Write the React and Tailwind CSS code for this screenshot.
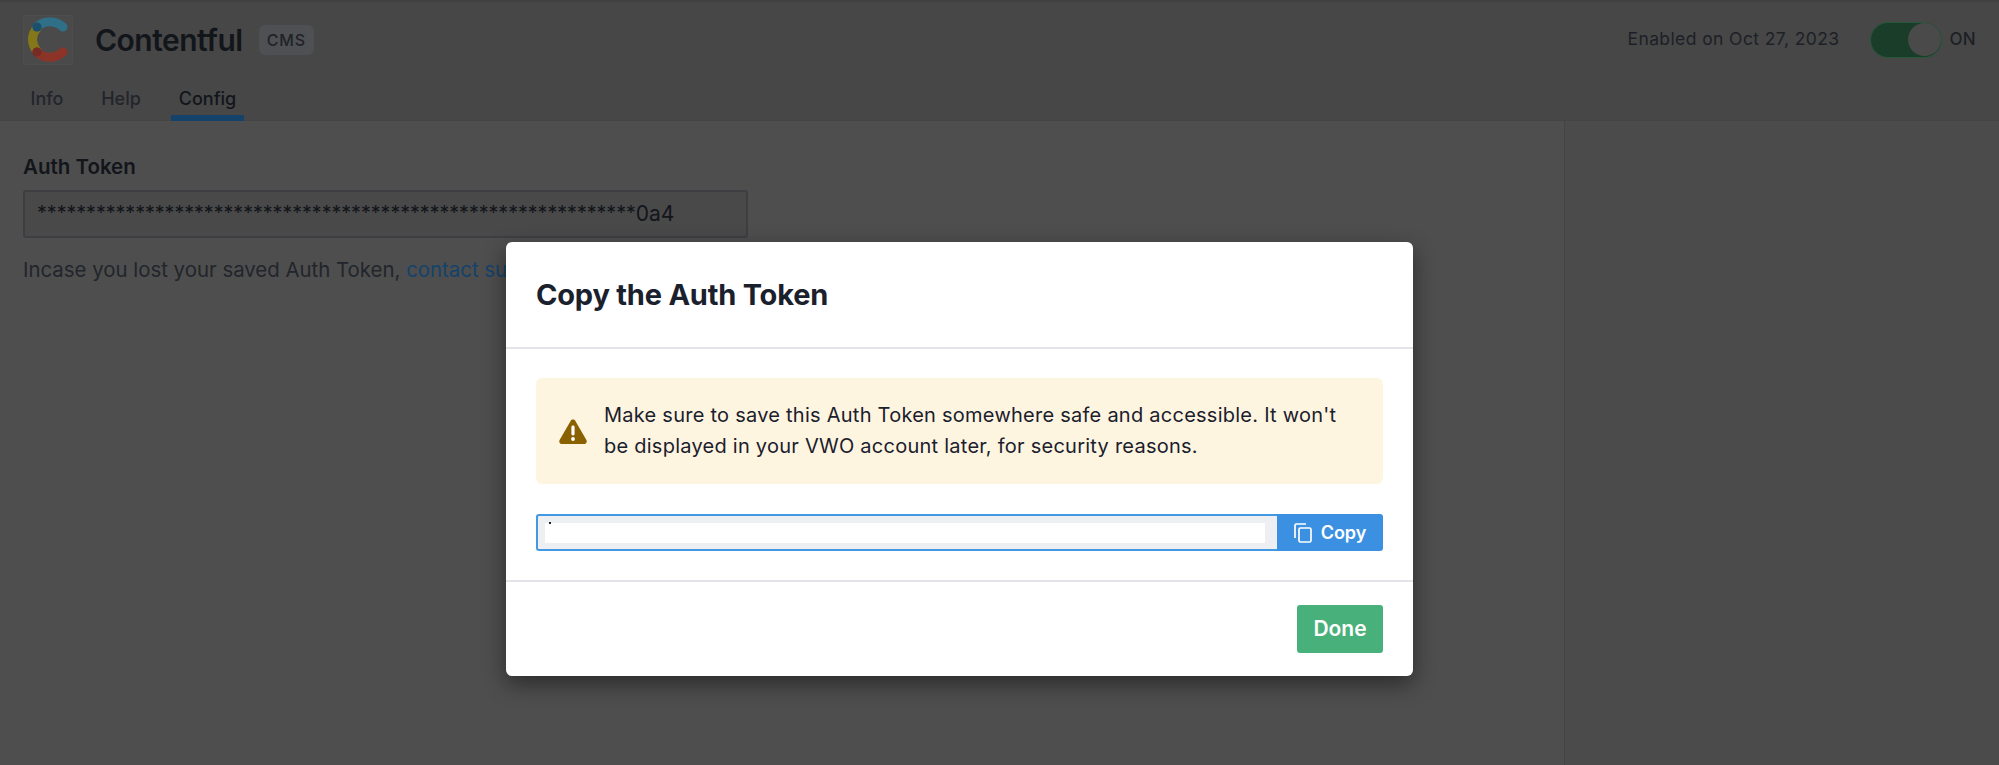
import React from "react";

const FONT = { fontFamily: "Inter, sans-serif" };

const ContentfulLogo = () => (
  <svg width="42" height="48" viewBox="0 0 42 48" fill="none" strokeLinecap="round" strokeWidth="9">
    <path d="M10 35 C4 28 4 19 10 12" stroke="#84771a" />
    <path d="M10 36 C17 43 28 43 36 36" stroke="#8c3428" />
    <path d="M10 11 C17 4 28 4 36 11" stroke="#2f6f88" />
    <circle cx="10" cy="11" r="4.600" fill="#1c4f6c" />
    <circle cx="10" cy="36" r="4.600" fill="#762b24" />
  </svg>
);

const WarningIcon = () => (
  <svg width="28" height="25" viewBox="0 0 28 25" className="shrink-0">
    <path d="M14 0.5c1 0 1.9.5 2.4 1.4l11 19.2c1 1.8-.3 3.9-2.4 3.9H3c-2.1 0-3.4-2.1-2.4-3.9l11-19.2C12.100 1 13 .5 14 .5z" fill="#8a6100" />
    <rect x="12.400" y="6.500" width="3.200" height="10" rx="1.400" fill="#fff" />
    <circle cx="14" cy="20" r="1.900" fill="#fff" />
  </svg>
);

const CopyIcon = () => (
  <svg width="18" height="20" viewBox="0 0 18 20" fill="none" stroke="#fff" strokeWidth="1.700">
    <path d="M12 1H2.500A1.500 1.500 0 0 0 1 2.500V15" />
    <rect x="5" y="5" width="12" height="14" rx="1.500" />
  </svg>
);

const tabs = [
  { name: "Info", width: "w-[48px]" },
  { name: "Help", width: "w-[56px]" },
  { name: "Config", width: "w-[73px]" },
];

const App = () => {
  return (
    <div className="relative h-[765px] w-full overflow-hidden bg-[#4e4e4e]" style={FONT}>
      {/* Header */}
      <div className="h-[121px] border-b border-[#444444] bg-[#474747] border-t-2 border-t-[#414141]">
        <div className="flex h-[75px] items-center justify-between pl-[23px] pr-[23px]">
          <div className="flex items-center">
            <div className="flex h-[50px] w-[50px] items-center justify-center rounded-[3px] border border-[#4e4e4e] bg-[#4a4a4a]">
              <ContentfulLogo />
            </div>
            <span className="ml-[22px] text-[30px] font-semibold leading-none tracking-[-0.5px] text-[#12151a]">Contentful</span>
            <span className="ml-[16px] rounded-md bg-[#4e5054] px-2 py-[5px] text-[16px] font-medium leading-[20px] tracking-[0.8px] text-[#1f2228]">CMS</span>
          </div>
          <div className="flex items-center">
            <span className="text-[17.500px] tracking-[0.4px] text-[#1d2026]">Enabled on Oct 27, 2023</span>
            <div className="ml-[30px] flex h-[36px] w-[72px] items-center justify-end rounded-full border border-[#28563c] bg-[#1a3d2a]">
              <div className="h-[33px] w-[33px] rounded-full bg-[#4a4a4a]" />
            </div>
            <span className="ml-2 text-[17px] font-medium tracking-[0.3px] text-[#1d2026]">ON</span>
          </div>
        </div>
        <div className="flex h-[44px] items-end gap-[22px] pl-[23px]">
          {tabs.map((tab) => (
            <div
              key={tab.name}
              className={`flex h-[44px] ${tab.width} items-start justify-center border-b-[6px] pt-[8px] text-[18px] font-medium leading-[28px] ${
                tab.name === "Config" ? "border-[#14426b] text-[#12151a]" : "border-transparent text-[#22252b]"
              }`}
            >
              {tab.name}
            </div>
          ))}
        </div>
      </div>

      {/* Body */}
      <div className="flex h-[644px]">
        <div className="w-[1565px] border-r border-[#444444] pl-[23px] pt-[33px]">
          <div className="text-[20.500px] font-semibold leading-[26px] text-[#12151a]">Auth Token</div>
          <div className="mt-[10px] flex h-[48px] w-[725px] items-center rounded-[3px] border-2 border-[#3c3e42] bg-[#494949] pl-[12px] text-[19.600px] text-[#12151a]">
            *************************************************************<span className="text-[21px]">0a4</span>
          </div>
          <p className="mt-[18px] text-[20.400px] leading-[28px] text-[#22252b]">
            Incase you lost your saved Auth Token, <span className="text-[#14426b]">contact support</span>
          </p>
        </div>
        <div className="flex-1 bg-[#4b4b4b]" />
      </div>

      {/* Modal */}
      <div className="absolute left-[506px] top-[242px] h-[434px] w-[907px] rounded-md bg-white text-[#1a202c] shadow-[0_8px_22px_rgba(0,0,0,0.45)]">
        <div className="flex h-[107px] items-center border-b-2 border-[#e2e4ea] px-[30px]">
          <h2 className="text-[29px] font-bold tracking-[-0.2px]">Copy the Auth Token</h2>
        </div>
        <div className="h-[233px] border-b-2 border-[#e2e4ea] px-[30px] pt-[29px]">
          <div className="flex h-[106px] items-center rounded-md bg-[#fef5e0] pl-[23px] pr-[40px]">
            <WarningIcon />
            <p className="ml-[17px] text-[20px] leading-[31px] tracking-[0.25px]">
              Make sure to save this Auth Token somewhere safe and accessible. It won't be displayed in your VWO account later, for security reasons.
            </p>
          </div>
          <div className="mt-[30px] flex h-[37px]">
            <div className="relative flex flex-1 items-center rounded-l-[3px] border-2 border-r-0 border-[#4299e1] bg-[#edeff2] pl-[7px] pr-[12px]">
              <div className="h-[20px] w-full bg-white" />
              <span className="absolute left-[11px] top-[6px] h-[2px] w-[2px] bg-[#1a202c]" />
            </div>
            <button className="flex w-[106px] items-center justify-center gap-[9px] rounded-r-[3px] bg-[#3b90e2] text-[18px] font-semibold text-white">
              <CopyIcon />
              Copy
            </button>
          </div>
        </div>
        <div className="flex justify-end px-[30px] pt-[23px]">
          <button className="h-[48px] w-[86px] rounded-[3px] bg-[#48b07a] text-[21px] font-semibold text-white">Done</button>
        </div>
      </div>
    </div>
  );
};

export default App;
